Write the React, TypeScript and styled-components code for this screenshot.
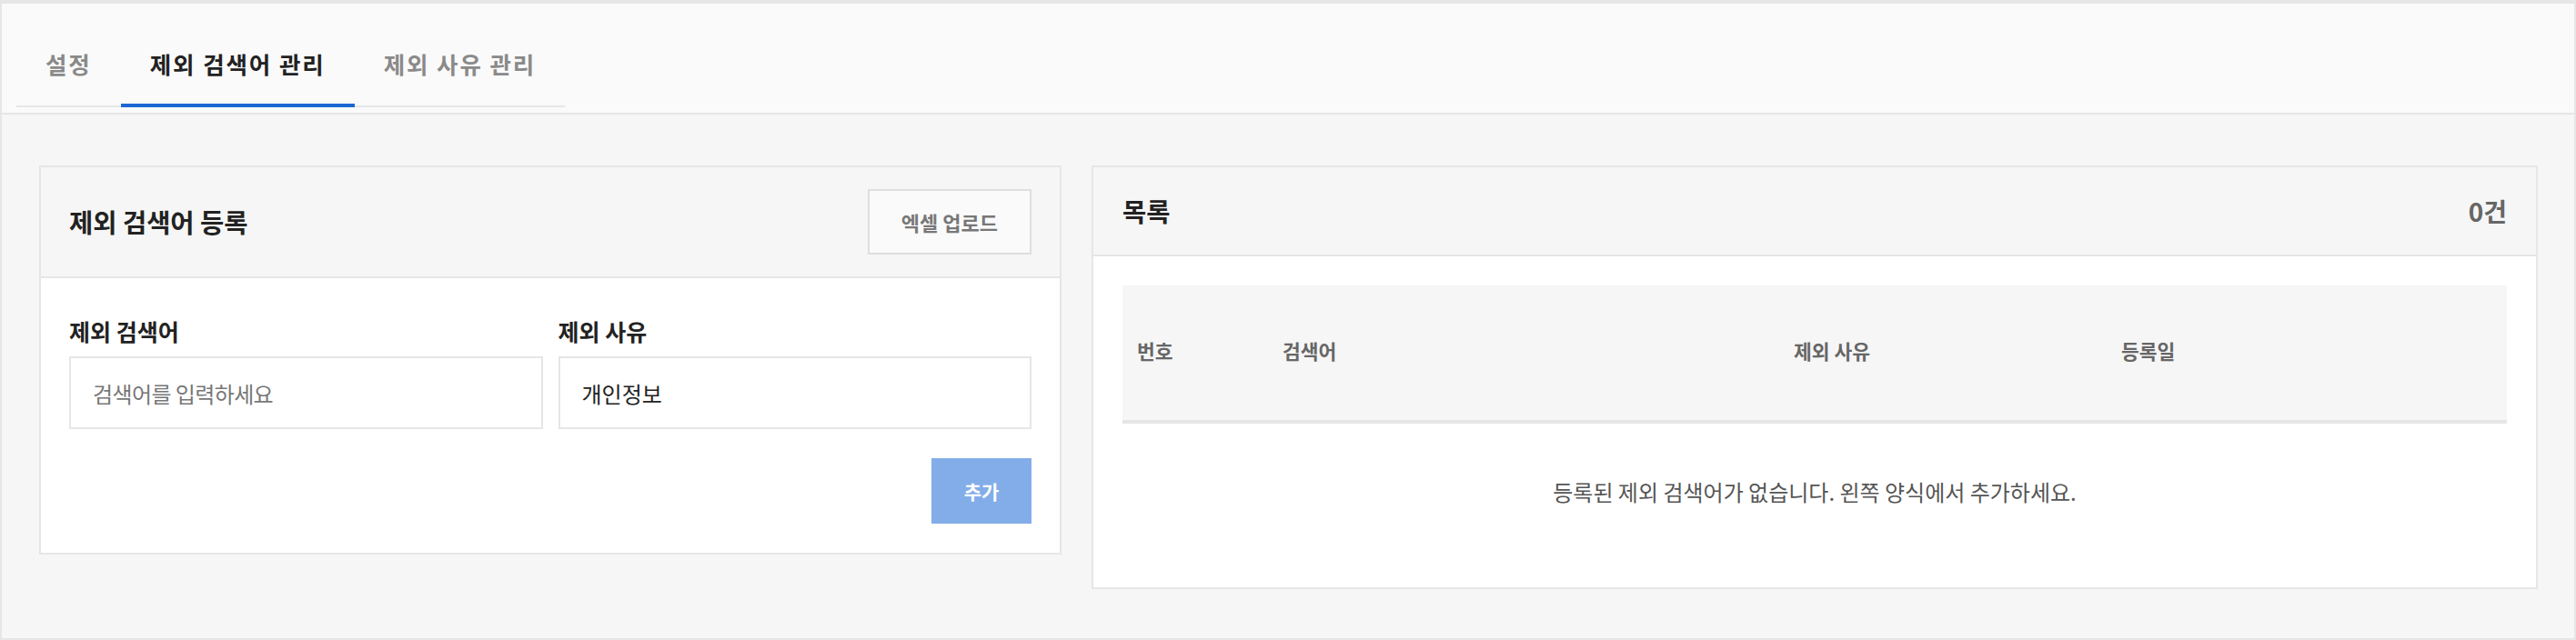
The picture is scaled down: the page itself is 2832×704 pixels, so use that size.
import React from "react"
import styled, { createGlobalStyle } from "styled-components"

const GlobalStyle = createGlobalStyle`
    html, body {
        margin: 0;
        padding: 0;
        background: #f6f6f6;
    }
    body {
        font-family: "Noto Sans CJK KR", "Noto Sans", sans-serif;
        color: #222;
    }
    * {
        box-sizing: border-box;
    }
`

const Frame = styled.div`
    width: 2832px;
    height: 704px;
    display: flex;
    flex-direction: column;
    background: #f6f6f6;
    border: 2px solid #e6e6e6;
    border-top-width: 4px;
`

const TabBar = styled.div`
    background: #fafafa;
    padding: 20px 16px 6px;
    border-bottom: 2px solid #e6e6e6;
`

const TabList = styled.div`
    display: flex;
    width: fit-content;
    border-bottom: 2px solid #e6e6e6;
`

const Tab = styled.div<{ $active?: boolean }>`
    height: 94px;
    margin-bottom: -2px;
    padding: 0 32px;
    display: flex;
    align-items: center;
    font-size: 25.5px;
    font-weight: 700;
    letter-spacing: 1.9px;
    color: ${(p) => (p.$active ? "#222" : "#8a8a8a")};
    border-bottom: 4px solid ${(p) => (p.$active ? "#1d66d4" : "transparent")};
    cursor: pointer;
`

const Content = styled.div`
    flex: 1;
    display: flex;
    align-items: flex-start;
    gap: 33px;
    padding: 56px 40px 0 41px;
`

const Panel = styled.section<{ $width?: string }>`
    flex: ${(p) => (p.$width ? `0 0 ${p.$width}` : "1")};
    background: #fff;
    border: 2px solid #e6e6e6;
`

const PanelHeader = styled.div<{ $side: number }>`
    display: flex;
    align-items: center;
    justify-content: space-between;
    padding: 24px ${(p) => p.$side}px;
    background: #f6f6f6;
    border-bottom: 2px solid #e6e6e6;
`

const Title = styled.h2`
    margin: 0;
    font-size: 28.5px;
    line-height: 48px;
    font-weight: 700;
    color: #222;
`

const Count = styled.span`
    font-size: 28px;
    line-height: 48px;
    font-weight: 700;
    color: #666;
`

const GhostButton = styled.button`
    height: 72px;
    padding: 0 35px;
    background: #fafafa;
    border: 2px solid #dedede;
    font-family: inherit;
    font-size: 22px;
    font-weight: 700;
    color: #777;
    cursor: pointer;
`

const FormBody = styled.div`
    padding: 40px 31px 32px;
    display: flex;
    flex-direction: column;
`

const Fields = styled.div`
    display: grid;
    grid-template-columns: 1fr 1fr;
    gap: 17px;
`

const Field = styled.label`
    display: flex;
    flex-direction: column;
    gap: 10px;
`

const FieldLabel = styled.span`
    font-size: 25px;
    line-height: 36px;
    font-weight: 700;
    color: #222;
`

const TextInput = styled.input`
    height: 80px;
    padding: 0 24px;
    border: 2px solid #e6e6e6;
    background: #fff;
    font-family: inherit;
    font-size: 24px;
    color: #222;
    outline: none;
    &::placeholder {
        color: #777;
        letter-spacing: -0.6px;
    }
`

const Actions = styled.div`
    display: flex;
    justify-content: flex-end;
    margin-top: 32px;
`

const PrimaryButton = styled.button`
    width: 110px;
    height: 72px;
    border: 0;
    background: #83ade8;
    font-family: inherit;
    font-size: 21px;
    font-weight: 700;
    color: #fff;
    cursor: pointer;
`

const ListBody = styled.div`
    padding: 32px;
`

const COLS = "160px 562px 360px 1fr"

const HeadRow = styled.div`
    display: grid;
    grid-template-columns: ${COLS};
    align-items: center;
    height: 152px;
    padding-bottom: 4px;
    background: #f6f6f6;
    border-bottom: 4px solid #e6e6e6;
`

const HeadCell = styled.div`
    padding-left: 16px;
    font-size: 21.5px;
    line-height: 30px;
    font-weight: 700;
    color: #666;
`

const Empty = styled.div`
    height: 148px;
    display: flex;
    align-items: center;
    justify-content: center;
    text-align: center;
    font-size: 24px;
    color: #555;
`

const App = () => {
    return (
        <>
            <GlobalStyle />
            <Frame>
                <TabBar>
                    <TabList>
                        <Tab>설정</Tab>
                        <Tab $active>제외 검색어 관리</Tab>
                        <Tab>제외 사유 관리</Tab>
                    </TabList>
                </TabBar>
                <Content>
                    <Panel $width="1124px">
                        <PanelHeader $side={31}>
                            <Title>제외 검색어 등록</Title>
                            <GhostButton type="button">엑셀 업로드</GhostButton>
                        </PanelHeader>
                        <FormBody>
                            <Fields>
                                <Field>
                                    <FieldLabel>제외 검색어</FieldLabel>
                                    <TextInput placeholder="검색어를 입력하세요" />
                                </Field>
                                <Field>
                                    <FieldLabel>제외 사유</FieldLabel>
                                    <TextInput defaultValue="개인정보" />
                                </Field>
                            </Fields>
                            <Actions>
                                <PrimaryButton type="button">추가</PrimaryButton>
                            </Actions>
                        </FormBody>
                    </Panel>
                    <Panel>
                        <PanelHeader $side={32}>
                            <Title>목록</Title>
                            <Count>0건</Count>
                        </PanelHeader>
                        <ListBody>
                            <HeadRow>
                                <HeadCell>번호</HeadCell>
                                <HeadCell>검색어</HeadCell>
                                <HeadCell>제외 사유</HeadCell>
                                <HeadCell>등록일</HeadCell>
                            </HeadRow>
                            <Empty>등록된 제외 검색어가 없습니다. 왼쪽 양식에서 추가하세요.</Empty>
                        </ListBody>
                    </Panel>
                </Content>
            </Frame>
        </>
    )
}

export default App
